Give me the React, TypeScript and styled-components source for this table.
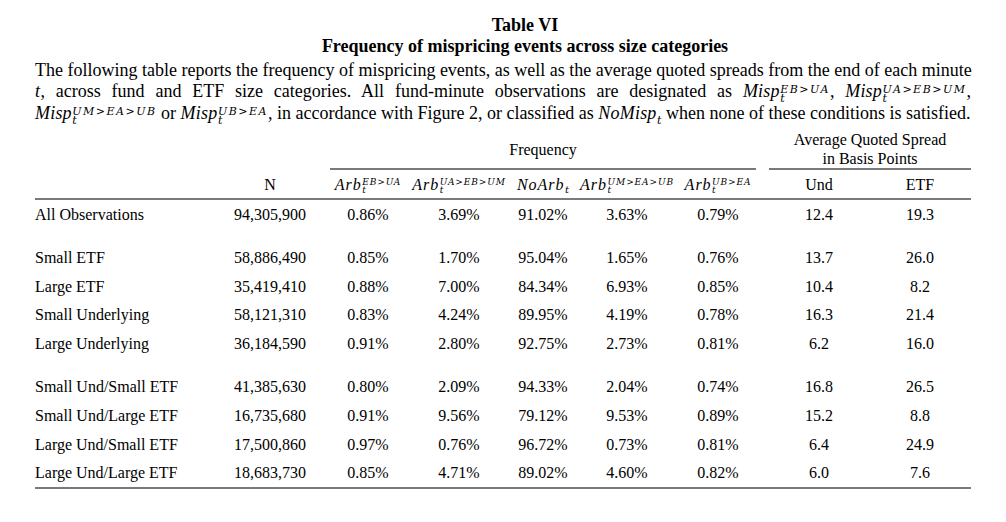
import React from "react";
import styled, { createGlobalStyle } from "styled-components";

const GlobalStyle = createGlobalStyle`
  html, body { margin: 0; padding: 0; background: #ffffff; }
  body {
    color: #000000;
    font-family: "Liberation Serif", "Times New Roman", serif;
  }
`;

const Page = styled.div`
  padding: 0 35px;
  width: 1006px;
  box-sizing: border-box;
`;

const TitleBlock = styled.div`
  padding: 15px 0 0 44px;
  text-align: center;
  font-weight: bold;
  font-size: 18px;
  line-height: 21px;
`;

const Caption = styled.div`
  margin-top: 3.4px;
  font-size: 18px;
`;

const CaptionLine = styled.div<{ $last?: boolean }>`
  height: 21px;
  line-height: 21px;
  white-space: nowrap;
  text-align: ${(p) => (p.$last ? "left" : "justify")};
  text-align-last: ${(p) => (p.$last ? "left" : "justify")};
  margin-top: ${(p) => (p.$last ? "1px" : "0")};
`;

const MathVar = styled.span<{ $track?: number }>`
  font-family: "Liberation Serif", serif;
  font-style: italic;
  letter-spacing: ${(p) => p.$track ?? 0.5}px;
`;

const ScriptStack = styled.span<{
  $size: number;
  $gap: number;
  $raise: number;
  $track: number;
}>`
  display: inline-flex;
  flex-direction: column;
  align-items: flex-start;
  font-family: "DejaVu Serif", serif;
  font-style: italic;
  font-size: ${(p) => p.$size}px;
  line-height: ${(p) => p.$gap}px;
  letter-spacing: ${(p) => p.$track}px;
  vertical-align: ${(p) => p.$raise}px;
  margin-left: 0.5px;
`;

const SubOnly = styled.span<{ $size: number; $drop: number }>`
  font-family: "DejaVu Serif", serif;
  font-style: italic;
  font-size: ${(p) => p.$size}px;
  line-height: 0;
  vertical-align: -${(p) => p.$drop}px;
  margin-left: 0.5px;
`;

type Scale = "text" | "table";

const scales = {
  text: { size: 11, gap: 8.8, raise: 4.3, track: 1.5, drop: 4.5, subSize: 11 },
  table: { size: 9, gap: 8.3, raise: 5.3, track: 0.9, drop: 3, subSize: 10 },
};

const Sym: React.FC<{ base: string; sup?: string; sub: string; scale: Scale }> = ({
  base,
  sup,
  sub,
  scale,
}) => {
  const s = scales[scale];
  return (
    <span>
      <MathVar $track={scale === "table" ? 1 : 0.2}>{base}</MathVar>
      {sup ? (
        <ScriptStack $size={s.size} $gap={s.gap} $raise={s.raise} $track={s.track}>
          <span>{sup}</span>
          <span>{sub}</span>
        </ScriptStack>
      ) : (
        <SubOnly $size={s.subSize} $drop={s.drop}>
          {sub}
        </SubOnly>
      )}
    </span>
  );
};

const Table = styled.table`
  margin-top: 5.5px;
  width: 936px;
  table-layout: fixed;
  border-collapse: separate;
  border-spacing: 0;
  font-size: 16px;
`;

const LINE = "2px solid #7a7a7a";

const GroupCell = styled.td<{ $line?: boolean }>`
  box-sizing: border-box;
  height: 40.6px;
  padding: 0;
  text-align: center;
  vertical-align: middle;
  line-height: 19.3px;
  border-bottom: ${(p) => (p.$line ? LINE : "none")};
`;

const HeadCell = styled.td`
  box-sizing: border-box;
  height: 30px;
  padding: 1px 0 0 0;
  text-align: center;
  vertical-align: middle;
  line-height: 18px;
  white-space: nowrap;
  border-bottom: ${LINE};
`;

const DataCell = styled.td<{ $label?: boolean; $last?: boolean }>`
  box-sizing: border-box;
  height: ${(p) => (p.$last ? 29.7 : 28.7)}px;
  padding: 0;
  line-height: 18px;
  white-space: nowrap;
  vertical-align: middle;
  text-align: ${(p) => (p.$label ? "left" : "center")};
  border-bottom: ${(p) => (p.$last ? LINE : "none")};
`;

const SpacerCell = styled.td`
  height: 14.6px;
  padding: 0;
`;

const widths = [175, 120, 76, 106, 62, 106, 76, 13, 100, 102];

type Row = string[] | null;

const rows: Row[] = [
  ["All Observations", "94,305,900", "0.86%", "3.69%", "91.02%", "3.63%", "0.79%", "12.4", "19.3"],
  null,
  ["Small ETF", "58,886,490", "0.85%", "1.70%", "95.04%", "1.65%", "0.76%", "13.7", "26.0"],
  ["Large ETF", "35,419,410", "0.88%", "7.00%", "84.34%", "6.93%", "0.85%", "10.4", "8.2"],
  ["Small Underlying", "58,121,310", "0.83%", "4.24%", "89.95%", "4.19%", "0.78%", "16.3", "21.4"],
  ["Large Underlying", "36,184,590", "0.91%", "2.80%", "92.75%", "2.73%", "0.81%", "6.2", "16.0"],
  null,
  ["Small Und/Small ETF", "41,385,630", "0.80%", "2.09%", "94.33%", "2.04%", "0.74%", "16.8", "26.5"],
  ["Small Und/Large ETF", "16,735,680", "0.91%", "9.56%", "79.12%", "9.53%", "0.89%", "15.2", "8.8"],
  ["Large Und/Small ETF", "17,500,860", "0.97%", "0.76%", "96.72%", "0.73%", "0.81%", "6.4", "24.9"],
  ["Large Und/Large ETF", "18,683,730", "0.85%", "4.71%", "89.02%", "4.60%", "0.82%", "6.0", "7.6"],
];

export default function App() {
  return (
    <Page>
      <GlobalStyle />
      <TitleBlock>
        <div>Table VI</div>
        <div>Frequency of mispricing events across size categories</div>
      </TitleBlock>
      <Caption>
        <CaptionLine>
          The following table reports the frequency of mispricing events, as well as the average
          quoted spreads from the end of each minute
        </CaptionLine>
        <CaptionLine>
          <MathVar>t</MathVar>, across fund and ETF size categories. All fund-minute observations
          are designated as <Sym base="Misp" sup="EB>UA" sub="t" scale="text" />,{" "}
          <Sym base="Misp" sup="UA>EB>UM" sub="t" scale="text" />,
        </CaptionLine>
        <CaptionLine $last>
          <Sym base="Misp" sup="UM>EA>UB" sub="t" scale="text" /> or{" "}
          <Sym base="Misp" sup="UB>EA" sub="t" scale="text" />, in accordance with Figure 2, or
          classified as <Sym base="NoMisp" sub="t" scale="text" /> when none of these conditions is
          satisfied.
        </CaptionLine>
      </Caption>
      <Table>
        <colgroup>
          {widths.map((w, i) => (
            <col key={i} style={{ width: w }} />
          ))}
        </colgroup>
        <thead>
          <tr>
            <GroupCell />
            <GroupCell />
            <GroupCell colSpan={5} $line>
              Frequency
            </GroupCell>
            <GroupCell />
            <GroupCell colSpan={2} $line>
              Average Quoted Spread
              <br />
              in Basis Points
            </GroupCell>
          </tr>
          <tr>
            <HeadCell />
            <HeadCell>N</HeadCell>
            <HeadCell>
              <Sym base="Arb" sup="EB>UA" sub="t" scale="table" />
            </HeadCell>
            <HeadCell>
              <Sym base="Arb" sup="UA>EB>UM" sub="t" scale="table" />
            </HeadCell>
            <HeadCell>
              <Sym base="NoArb" sub="t" scale="table" />
            </HeadCell>
            <HeadCell>
              <Sym base="Arb" sup="UM>EA>UB" sub="t" scale="table" />
            </HeadCell>
            <HeadCell>
              <Sym base="Arb" sup="UB>EA" sub="t" scale="table" />
            </HeadCell>
            <HeadCell />
            <HeadCell>Und</HeadCell>
            <HeadCell>ETF</HeadCell>
          </tr>
        </thead>
        <tbody>
          {rows.map((r, i) => {
            if (!r) {
              return (
                <tr key={i}>
                  <SpacerCell colSpan={10} />
                </tr>
              );
            }
            const last = i === rows.length - 1;
            const cells = [...r.slice(0, 7), "", ...r.slice(7)];
            return (
              <tr key={i}>
                {cells.map((c, j) => (
                  <DataCell key={j} $label={j === 0} $last={last}>
                    {c}
                  </DataCell>
                ))}
              </tr>
            );
          })}
        </tbody>
      </Table>
    </Page>
  );
}
